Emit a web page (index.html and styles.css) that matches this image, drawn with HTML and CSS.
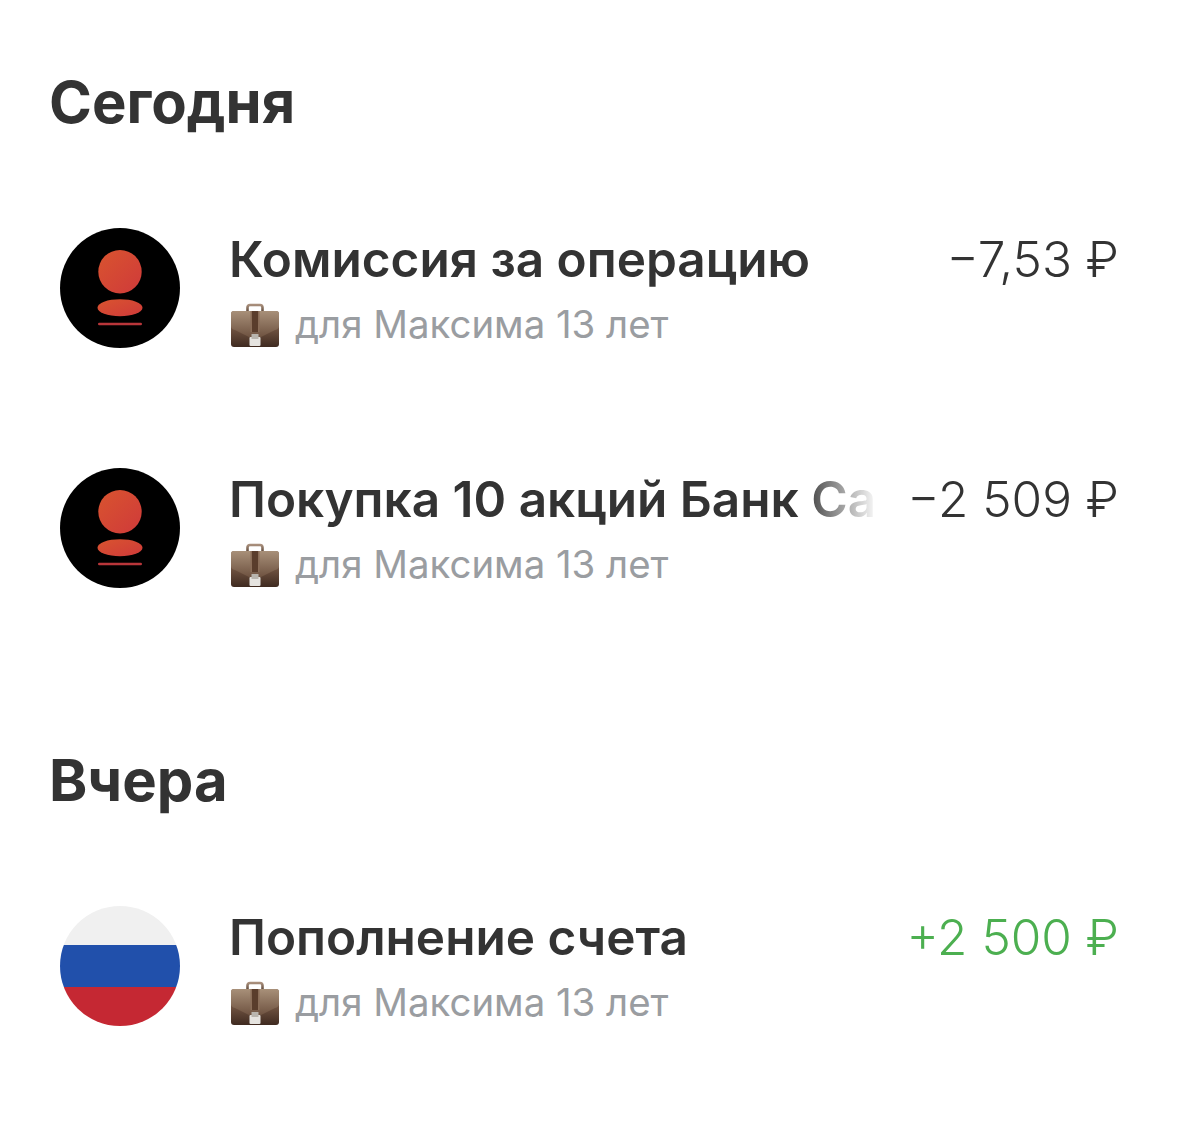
FILE: index.html
```html
<!DOCTYPE html>
<html lang="ru">
<head>
<meta charset="utf-8">
<title>Операции</title>
<link rel="stylesheet" href="styles.css">
</head>
<body>
<svg class="defs" width="0" height="0" aria-hidden="true">
  <defs>
    <linearGradient id="bag" x1="0" y1="0" x2="0" y2="1">
      <stop offset="0" stop-color="#8a6e5a"/>
      <stop offset="0.55" stop-color="#6a4e3d"/>
      <stop offset="1" stop-color="#3f2a20"/>
    </linearGradient>
    <linearGradient id="flap" x1="0" y1="0" x2="0" y2="1">
      <stop offset="0" stop-color="#a89079"/>
      <stop offset="1" stop-color="#6f5341"/>
    </linearGradient>
    <linearGradient id="handle" x1="0" y1="0" x2="0" y2="1">
      <stop offset="0" stop-color="#a98f7c"/>
      <stop offset="1" stop-color="#5b4638"/>
    </linearGradient>
    <linearGradient id="coin" x1="0" y1="0" x2="1" y2="1">
      <stop offset="0" stop-color="#d9542f"/>
      <stop offset="1" stop-color="#cf3a3a"/>
    </linearGradient>
    <symbol id="briefcase" viewBox="0 0 50 46">
      <path d="M17.500 10V5.500Q17.500 3 20 3H30Q32.500 3 32.500 5.500V10" fill="none" stroke="url(#handle)" stroke-width="2.600"/>
      <rect x="1" y="9" width="48" height="36" rx="3" fill="url(#bag)"/>
      <path d="M1 12Q1 9 4 9H46Q49 9 49 12V24Q49 27 45 28L31 35H19L5 28Q1 27 1 24Z" fill="url(#flap)"/>
      <rect x="20.500" y="9" width="9" height="21" fill="#8a6d58"/>
      <rect x="22" y="9" width="6" height="21" fill="#5a3d2c"/>
      <rect x="19.500" y="35" width="11" height="9" rx="1" fill="#e6e4e0"/>
      <rect x="21.500" y="32" width="7" height="5" fill="#b9b5ae"/>
    </symbol>
    <symbol id="brand" viewBox="0 0 120 120">
      <circle cx="60" cy="60" r="60" fill="#000"/>
      <circle cx="60" cy="43.700" r="21.700" fill="url(#coin)"/>
      <ellipse cx="60" cy="79.700" rx="22.500" ry="8.500" fill="url(#coin)"/>
      <rect x="38" y="94.700" width="44" height="2.600" rx="1.300" fill="#b8363a"/>
    </symbol>
  </defs>
</svg>
<main class="page">
  <section class="day">
    <h2 class="day-title">Сегодня</h2>
    <ul class="ops">
      <li class="op">
        <svg class="avatar"><use href="#brand"/></svg>
        <div class="op-body">
          <div class="op-top">
            <div class="op-name">Комиссия за операцию</div>
            <div class="op-sum">−7,53 ₽</div>
          </div>
          <div class="op-sub"><svg class="bag"><use href="#briefcase"/></svg><span>для Максима 13 лет</span></div>
        </div>
      </li>
      <li class="op">
        <svg class="avatar"><use href="#brand"/></svg>
        <div class="op-body">
          <div class="op-top">
            <div class="op-name op-name-fade">Покупка 10 акций Банк Са</div>
            <div class="op-sum">−2 509 ₽</div>
          </div>
          <div class="op-sub"><svg class="bag"><use href="#briefcase"/></svg><span>для Максима 13 лет</span></div>
        </div>
      </li>
    </ul>
  </section>
  <section class="day day-next">
    <h2 class="day-title">Вчера</h2>
    <ul class="ops">
      <li class="op">
        <div class="avatar flag"><i class="flag-w"></i><i class="flag-b"></i><i class="flag-r"></i></div>
        <div class="op-body">
          <div class="op-top">
            <div class="op-name">Пополнение счета</div>
            <div class="op-sum op-sum-in">+2 500 ₽</div>
          </div>
          <div class="op-sub"><svg class="bag"><use href="#briefcase"/></svg><span>для Максима 13 лет</span></div>
        </div>
      </li>
    </ul>
  </section>
</main>
</body>
</html>
```

FILE: styles.css
```css
html, body {
  margin: 0;
  padding: 0;
  background: #fff;
}
.defs {
  display: block;
  height: 0;
}
.page {
  box-sizing: border-box;
  width: 1179px;
  height: 1134px;
  padding: 68px 60px 0 49px;
  font-family: Inter, "Noto Sans", sans-serif;
  color: #333;
  overflow: hidden;
}
.day-title {
  margin: 0;
  height: 70px;
  font-size: 58px;
  line-height: 68px;
  font-weight: 700;
}
.day-next {
  margin-top: 158px;
}
.ops {
  list-style: none;
  margin: 90px 0 0;
  padding: 0;
  display: flex;
  flex-direction: column;
  gap: 120px;
}
.op {
  display: flex;
  gap: 50px;
  height: 120px;
  padding-left: 11px;
}
.avatar {
  flex: none;
  display: block;
  width: 120px;
  height: 120px;
}
.flag {
  display: flex;
  flex-direction: column;
  border-radius: 50%;
  overflow: hidden;
}
.flag-w {
  height: 39px;
  background: #f0f0f0;
}
.flag-b {
  height: 42px;
  background: #2150ab;
}
.flag-r {
  height: 39px;
  background: #c52833;
}
.op-body {
  flex: 1;
  min-width: 0;
  display: flex;
  flex-direction: column;
}
.op-top {
  display: flex;
  justify-content: space-between;
  gap: 20px;
  height: 64px;
  line-height: 62px;
}
.op-name {
  flex: 1;
  min-width: 0;
  margin-left: -1px;
  font-size: 49.500px;
  font-weight: 600;
  white-space: nowrap;
  overflow: hidden;
}
.op-name-fade {
  -webkit-mask-image: linear-gradient(to right, #000 87%, rgba(0, 0, 0, 0.05) 98%);
  mask-image: linear-gradient(to right, #000 87%, rgba(0, 0, 0, 0.05) 98%);
}
.op-sum {
  flex: none;
  font-size: 49.500px;
  font-weight: 350;
  white-space: nowrap;
}
.op-sum-in {
  color: #4caf50;
}
.op-sub {
  display: flex;
  align-items: center;
  gap: 15px;
  height: 46px;
  margin-top: 9px;
  font-size: 38.400px;
  line-height: 46px;
  color: #9a9da1;
  white-space: nowrap;
}
.bag {
  flex: none;
  display: block;
  width: 50px;
  height: 46px;
  margin-top: 2px;
}
```
